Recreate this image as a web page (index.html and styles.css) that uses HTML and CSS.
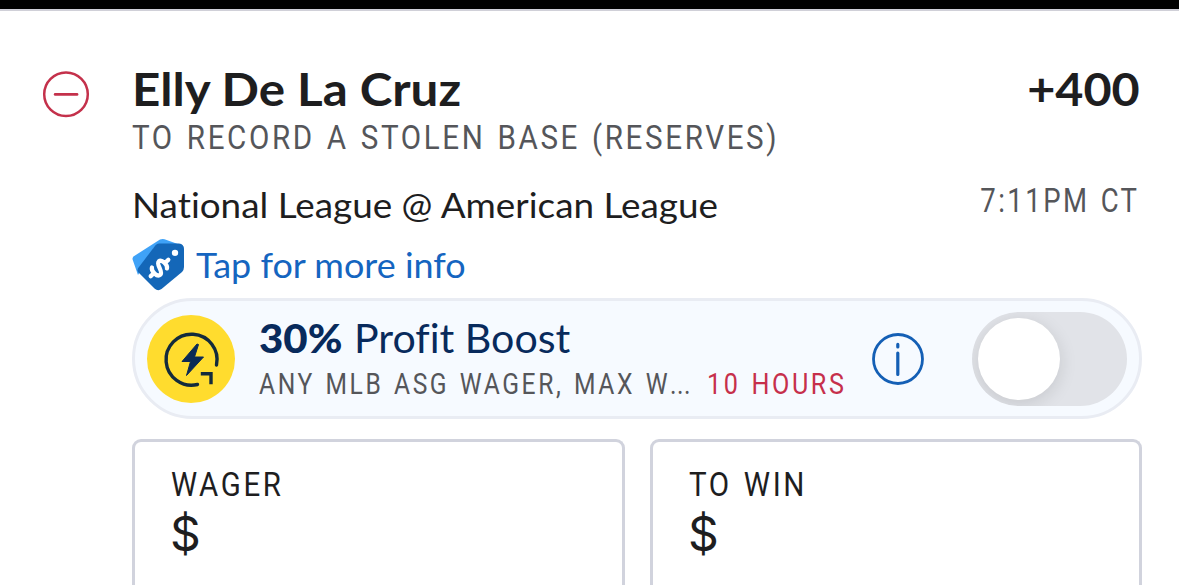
FILE: index.html
```html
<!DOCTYPE html>
<html lang="en">
<head>
<meta charset="utf-8">
<title>Bet slip</title>
<link rel="stylesheet" href="styles.css">
</head>
<body>
<div class="top-bar"></div>
<main class="slip">
  <button class="remove" aria-label="Remove">
    <svg width="48" height="48" viewBox="0 0 48 48" fill="none" stroke="#c4314b">
      <circle cx="24" cy="24.200" r="21.8" stroke-width="2.5"/>
      <path d="M13.2 24.4H35" stroke-width="2.8" stroke-linecap="round"/>
    </svg>
  </button>
  <section class="bet">
    <header class="row title-row">
      <h1 class="name"><span class="fit fit-name">Elly De La Cruz</span></h1>
      <div class="odds"><span class="fit fit-odds">+400</span></div>
    </header>
    <div class="market cond"><span class="fit fit-market">TO RECORD A STOLEN BASE (RESERVES)</span></div>
    <div class="row event-row">
      <div class="event"><span class="fit fit-event">National League @ American League</span></div>
      <div class="time cond"><span class="fit fit-time">7:11PM CT</span></div>
    </div>
    <a class="more">
      <svg class="tag" width="54" height="54" viewBox="0 0 54 54">
        <path d="M3 17.500Q0 18.500 .6 21.500L6 37L22 10L50 7.500L32.500 1.300Q30.500 .6 28 1.500Z" fill="#3fa2f7"/>
        <path d="M23.500 7.300Q25 5.700 27 5.600L47 5.600Q52 6.300 52 11V29Q52 32 50 34L29.500 51Q26 53.500 22.500 50.500L6.500 34.500Q4.800 32.500 6.200 30Z" fill="#1467b8"/>
        <circle cx="43" cy="14.900" r="3.200" fill="#fff"/>
        <g transform="translate(27.500 30) rotate(47)" fill="none" stroke="#fff" stroke-width="4.300" stroke-linecap="round">
          <path d="M5.300-5.200C3.500-8.200-5.200-8-5.300-3.900C-5.300.2 5.500-.4 5.500 4C5.500 8.200-3.500 8.400-5.500 5.200M0-8.500V-12M0 8.500V12"/>
        </g>
      </svg>
      <span class="fit fit-more">Tap for more info</span>
    </a>
    <div class="boost">
      <svg class="boost-icon" width="88" height="88" viewBox="0 0 88 88" fill="none">
        <circle cx="44" cy="44" r="44" fill="#ffdc2e"/>
        <path d="M69.500 50A25.500 25.500 0 1 0 50.500 69.500" stroke="#132b3c" stroke-width="3.400" stroke-linecap="round"/>
        <path d="M55.500 58.800H64V67.500" stroke="#132b3c" stroke-width="3.400" stroke-linecap="square"/>
        <path d="M50 29L35 46.500H43.500L39.500 60.500L56.500 42H47.500L51.500 29.500Z" fill="#0b2a55" stroke="#0b2a55" stroke-width="1" stroke-linejoin="round"/>
      </svg>
      <div class="boost-text">
        <div class="boost-title"><b class="fit fit-pct">30%</b><span class="fit fit-boost">Profit Boost</span></div>
        <div class="boost-sub cond"><div class="terms"><span class="fit fit-terms">ANY MLB ASG WAGER, MAX W<span class="dots">...</span></span></div><div class="expires"><span class="fit fit-expires">10 HOURS</span></div></div>
      </div>
      <svg class="info" width="52" height="52" viewBox="0 0 52 52" fill="none" stroke="#145fb5">
        <circle cx="26" cy="26" r="24.500" stroke-width="2.800"/>
        <path d="M25.800 20V41.500M25.800 11.400V14" stroke-width="3.200" stroke-linecap="round"/>
      </svg>
      <div class="toggle"><div class="knob"></div></div>
    </div>
    <div class="fields">
      <div class="field"><div class="label cond"><span class="fit fit-wager">WAGER</span></div><div class="money">$</div></div>
      <div class="field"><div class="label cond"><span class="fit fit-win">TO WIN</span></div><div class="money">$</div></div>
    </div>
  </section>
</main>
</body>
</html>
```
FILE: styles.css
```css
* { box-sizing: border-box; }
body {
  margin: 0;
  height: 585px;
  overflow: hidden;
  background: #fff;
  color: #1e1e1f;
  font-family: Lato, sans-serif;
  font-variant-ligatures: none;
  white-space: nowrap;
}
.top-bar { height: 11px; background: #000; border-bottom: 2px solid #d0d0d8; }
.slip { display: flex; padding: 52px 37px 0 42px; }
.remove { width: 48px; height: 48px; margin: 7px 42px 0 0; padding: 0; border: 0; background: none; }
.remove svg { display: block; }
.bet { width: 1010px; }
.row { display: flex; justify-content: space-between; }
.cond { font-family: Roboto, sans-serif; letter-spacing: 3px; word-spacing: 2.4px; }
.fit { display: inline-block; transform-origin: left center; }
.fit-name { transform: scaleX(1.072); }
.fit-odds { transform: scaleX(1.055); transform-origin: right center; }
.fit-market { transform: scaleX(.87); }
.fit-event { transform: scaleX(1.084); }
.fit-time { transform: scaleX(.81); transform-origin: right center; }
.fit-more { transform: scaleX(1.058); }
.fit-pct { transform: scaleX(1.05); }
.fit-boost { transform: scaleX(1.028); }
.fit-terms { transform: scaleX(.85); }
.fit-expires { transform: scaleX(.868); }
.fit-wager { transform: scaleX(.866); }
.fit-win { transform: scaleX(.87); }
.dots { letter-spacing: .6px; }
.title-row { height: 54px; font-size: 46px; line-height: 51px; font-weight: 700; }
.name { margin: 0; font: inherit; }
.odds { margin-right: 2px; }
.market { height: 67px; font-size: 34px; line-height: 40px; color: #55565a; }
.event-row { height: 54px; }
.event { font-size: 34px; line-height: 42px; }
.time { font-size: 34px; line-height: 33px; color: #55565a; margin-right: 3px; }
.more { display: flex; gap: 10px; height: 60px; font-size: 34px; line-height: 53px; color: #1565c0; }
.tag { flex: none; }
.boost {
  display: flex;
  align-items: center;
  height: 121px;
  padding: 0 12px;
  border: 3px solid #e9ecf3;
  border-radius: 61px;
  background: #f6faff;
}
.boost-icon { flex: none; margin-right: 24px; }
.boost-text { width: 614px; height: 90px; }
.boost-title { display: flex; height: 48px; font-size: 40px; line-height: 48px; color: #082a5c; }
.fit-pct { width: 95px; font-weight: 900; }
.boost-sub { display: flex; font-size: 29px; line-height: 44px; color: #55565a; }
.terms { width: 448px; }
.expires { color: #c62f4b; }
.info { flex: none; margin-right: 48px; }
.toggle {
  flex: none;
  width: 155px;
  height: 94px;
  padding: 6px;
  border-radius: 47px;
  background: #e1e3e8;
  overflow: hidden;
}
.knob { width: 82px; height: 82px; border-radius: 50%; background: #fff; box-shadow: 0 4px 18px rgba(0, 0, 0, .12); }
.fields { display: grid; grid-template-columns: 493px 492px; gap: 25px; margin-top: 20px; }
.field { height: 146px; padding: 22px 36px 0; border: 3px solid #d1d3dd; border-bottom: 0; border-radius: 9px 9px 0 0; }
.label { height: 44px; font-size: 34px; line-height: 40px; }
.money { font-family: Inter, sans-serif; font-size: 48px; line-height: 52px; margin-left: -1px; }
```
